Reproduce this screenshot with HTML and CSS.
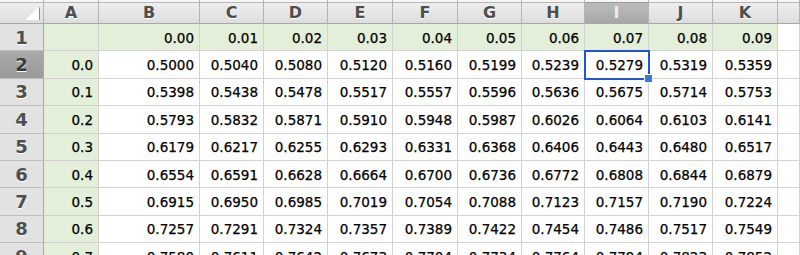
FILE: index.html
```html
<!DOCTYPE html>
<html lang="en">
<head>
    <meta charset="UTF-8">
    <title>Normal Distribution Table</title>
    <link rel="stylesheet" href="styles.css">
</head>
<body>
    <div class="sheet">
        <!-- Column headers -->
        <div class="col-head corner"><span class="corner-mark"></span></div>
        <div class="col-head">A</div>
        <div class="col-head">B</div>
        <div class="col-head">C</div>
        <div class="col-head">D</div>
        <div class="col-head">E</div>
        <div class="col-head">F</div>
        <div class="col-head">G</div>
        <div class="col-head">H</div>
        <div class="col-head active">I</div>
        <div class="col-head">J</div>
        <div class="col-head">K</div>
        <div class="col-head"></div>

        <!-- Row 1 -->
        <div class="row-head">1</div>
        <div class="cell label"></div>
        <div class="cell label">0.00</div>
        <div class="cell label">0.01</div>
        <div class="cell label">0.02</div>
        <div class="cell label">0.03</div>
        <div class="cell label">0.04</div>
        <div class="cell label">0.05</div>
        <div class="cell label">0.06</div>
        <div class="cell label">0.07</div>
        <div class="cell label">0.08</div>
        <div class="cell label">0.09</div>
        <div class="cell"></div>

        <!-- Row 2 -->
        <div class="row-head active">2</div>
        <div class="cell label">0.0</div>
        <div class="cell">0.5000</div>
        <div class="cell">0.5040</div>
        <div class="cell">0.5080</div>
        <div class="cell">0.5120</div>
        <div class="cell">0.5160</div>
        <div class="cell">0.5199</div>
        <div class="cell">0.5239</div>
        <div class="cell selected">0.5279</div>
        <div class="cell">0.5319</div>
        <div class="cell">0.5359</div>
        <div class="cell"></div>

        <!-- Row 3 -->
        <div class="row-head">3</div>
        <div class="cell label">0.1</div>
        <div class="cell">0.5398</div>
        <div class="cell">0.5438</div>
        <div class="cell">0.5478</div>
        <div class="cell">0.5517</div>
        <div class="cell">0.5557</div>
        <div class="cell">0.5596</div>
        <div class="cell">0.5636</div>
        <div class="cell">0.5675</div>
        <div class="cell">0.5714</div>
        <div class="cell">0.5753</div>
        <div class="cell"></div>

        <!-- Row 4 -->
        <div class="row-head">4</div>
        <div class="cell label">0.2</div>
        <div class="cell">0.5793</div>
        <div class="cell">0.5832</div>
        <div class="cell">0.5871</div>
        <div class="cell">0.5910</div>
        <div class="cell">0.5948</div>
        <div class="cell">0.5987</div>
        <div class="cell">0.6026</div>
        <div class="cell">0.6064</div>
        <div class="cell">0.6103</div>
        <div class="cell">0.6141</div>
        <div class="cell"></div>

        <!-- Row 5 -->
        <div class="row-head">5</div>
        <div class="cell label">0.3</div>
        <div class="cell">0.6179</div>
        <div class="cell">0.6217</div>
        <div class="cell">0.6255</div>
        <div class="cell">0.6293</div>
        <div class="cell">0.6331</div>
        <div class="cell">0.6368</div>
        <div class="cell">0.6406</div>
        <div class="cell">0.6443</div>
        <div class="cell">0.6480</div>
        <div class="cell">0.6517</div>
        <div class="cell"></div>

        <!-- Row 6 -->
        <div class="row-head">6</div>
        <div class="cell label">0.4</div>
        <div class="cell">0.6554</div>
        <div class="cell">0.6591</div>
        <div class="cell">0.6628</div>
        <div class="cell">0.6664</div>
        <div class="cell">0.6700</div>
        <div class="cell">0.6736</div>
        <div class="cell">0.6772</div>
        <div class="cell">0.6808</div>
        <div class="cell">0.6844</div>
        <div class="cell">0.6879</div>
        <div class="cell"></div>

        <!-- Row 7 -->
        <div class="row-head">7</div>
        <div class="cell label">0.5</div>
        <div class="cell">0.6915</div>
        <div class="cell">0.6950</div>
        <div class="cell">0.6985</div>
        <div class="cell">0.7019</div>
        <div class="cell">0.7054</div>
        <div class="cell">0.7088</div>
        <div class="cell">0.7123</div>
        <div class="cell">0.7157</div>
        <div class="cell">0.7190</div>
        <div class="cell">0.7224</div>
        <div class="cell"></div>

        <!-- Row 8 -->
        <div class="row-head">8</div>
        <div class="cell label">0.6</div>
        <div class="cell">0.7257</div>
        <div class="cell">0.7291</div>
        <div class="cell">0.7324</div>
        <div class="cell">0.7357</div>
        <div class="cell">0.7389</div>
        <div class="cell">0.7422</div>
        <div class="cell">0.7454</div>
        <div class="cell">0.7486</div>
        <div class="cell">0.7517</div>
        <div class="cell">0.7549</div>
        <div class="cell"></div>

        <!-- Row 9 -->
        <div class="row-head">9</div>
        <div class="cell label">0.7</div>
        <div class="cell">0.7580</div>
        <div class="cell">0.7611</div>
        <div class="cell">0.7642</div>
        <div class="cell">0.7673</div>
        <div class="cell">0.7704</div>
        <div class="cell">0.7734</div>
        <div class="cell">0.7764</div>
        <div class="cell">0.7794</div>
        <div class="cell">0.7823</div>
        <div class="cell">0.7852</div>
        <div class="cell"></div>
    </div>
</body>
</html>
```

FILE: styles.css
```css
* {
    box-sizing: border-box;
    margin: 0;
    padding: 0;
}

body {
    background-color: #ffffff;
    overflow: hidden;
    font-family: "DejaVu Sans", "Liberation Sans", sans-serif;
}

.sheet {
    display: grid;
    grid-template-columns: 44px 55px 101px 64px 64px 65px 65px 64px 63px 64px 64px 65px 22px;
    grid-template-rows: 24px repeat(9, 27.4px);
    width: 800px;
}

.col-head {
    display: flex;
    align-items: center;
    justify-content: center;
    padding-top: 2px;
    background: linear-gradient(#f6f6f6 0, #f6f6f6 2px, #b8b8b8 2px, #b8b8b8 3px, #eeeeee 3px, #dddddd);
    border-right: 1px solid #b4b4b4;
    border-bottom: 1px solid #a8a8a8;
    color: #4e4e4e;
    font-size: 16px;
    font-weight: bold;
    text-shadow: 0 1px 0 #fff;
}

.col-head.active {
    background: linear-gradient(#f6f6f6 0, #f6f6f6 2px, #9a9a9a 2px, #9a9a9a 3px, #bdbdbd 3px, #a6a6a6);
    color: #ececec;
    text-shadow: none;
}

.corner {
    position: relative;
}

.corner-mark {
    position: absolute;
    right: 4px;
    bottom: 3px;
    width: 0;
    height: 0;
    border-left: 14px solid transparent;
    border-bottom: 13px solid #ffffff;
    filter: drop-shadow(1px 0 0 #8a8a8a);
}

.row-head {
    display: flex;
    align-items: center;
    justify-content: center;
    background: #e2e2e2;
    border-right: 1px solid #a8a8a8;
    border-bottom: 1px solid #bdbdbd;
    color: #4e4e4e;
    font-size: 18px;
    font-weight: bold;
    text-shadow: 0 1px 0 #fff;
}

.row-head.active {
    background: linear-gradient(#a9a9a9, #9a9a9a);
    color: #3a3a3a;
}

.cell {
    display: flex;
    align-items: center;
    justify-content: flex-end;
    padding: 1px 5px 0 0;
    border-right: 1px solid #d2d2d2;
    border-bottom: 1px solid #d2d2d2;
    color: #000;
    font-size: 13.5px;
    -webkit-text-stroke: 0.25px #000;
}

.cell.label {
    background-color: #e3efd8;
}

.cell.selected {
    position: relative;
    outline: 2px solid #1f55d8;
    outline-offset: -1px;
}

.cell.selected::after {
    content: "";
    position: absolute;
    right: -5px;
    bottom: -5px;
    width: 7px;
    height: 7px;
    background-color: #3a78e0;
    border: 1px solid #ffffff;
    z-index: 2;
}
```
